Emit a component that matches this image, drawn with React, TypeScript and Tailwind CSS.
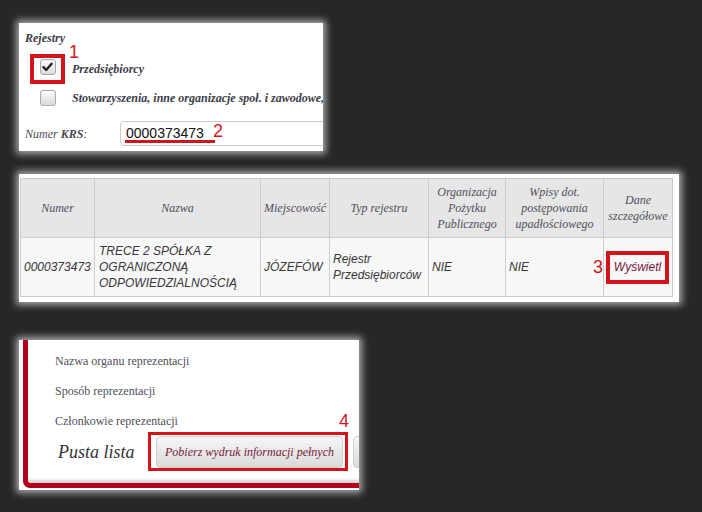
import React from 'react';

const serif = "font-['Liberation_Serif',serif]";
const sans = "font-['Liberation_Sans',Arial,sans-serif]";
const mark = `${sans} text-[18px] leading-none text-[#d0161b]`;
const glow = 'bg-white shadow-[0_0_7px_3px_rgba(255,255,255,0.6)] overflow-hidden';

function Checkbox({ checked }: { checked?: boolean }) {
  return (
    <div className="w-[16px] h-[16px] shrink-0 rounded-[3px] border border-[#a8a8a8] bg-gradient-to-b from-[#fbfbfb] to-[#dcdcdc] flex items-center justify-center">
      {checked && (
        <svg width="11" height="10" viewBox="0 0 11 10">
          <path d="M1.5 5.2 L4.2 8 L9.6 1.8" fill="none" stroke="#222" strokeWidth="2.4" strokeLinecap="round" strokeLinejoin="round" />
        </svg>
      )}
    </div>
  );
}

const headers = [
  { w: 'w-[74px]', label: 'Numer' },
  { w: 'w-[166px]', label: 'Nazwa' },
  { w: 'w-[69px]', label: 'Miejscowość' },
  { w: 'w-[99px]', label: 'Typ rejestru' },
  { w: 'w-[77px]', label: 'Organizacja Pożytku Publicznego' },
  { w: 'w-[98px]', label: 'Wpisy dot. postępowania upadłościowego' },
  { w: 'w-[69px]', label: 'Dane szczegółowe' },
];

export default function App() {
  return (
    <div className="min-h-[512px] w-full bg-[#272727] pl-[19px] pt-[23px] flex flex-col items-start">
      {/* Rejestry / KRS */}
      <div className={`relative w-[304px] h-[128px] ${glow} ${serif}`}>
        <div className="pl-[6px] pt-[8px] text-[12px] leading-[15px] font-bold italic text-[#3d3d48]">Rejestry</div>

        <div className="mt-[8px] ml-[11px] flex items-center h-[30px]">
          <div className="relative shrink-0 w-[35px] h-[30px] border-4 border-[#d0161b] flex justify-center items-start pt-[1px]">
            <Checkbox checked />
            <span className={`absolute left-[35px] top-[-15px] ${mark}`}>1</span>
          </div>
          <span className="ml-[7px] text-[12px] font-bold italic text-[#3d3d48]">Przedsiębiorcy</span>
        </div>

        <div className="mt-[6px] ml-[21px] flex items-center h-[16px] whitespace-nowrap">
          <Checkbox />
          <span className="ml-[16px] text-[12px] font-bold italic text-[#3d3d48]">
            Stowarzyszenia, inne organizacje społ. i zawodowe,
          </span>
        </div>

        <div className="mt-[15px] pl-[6px] flex items-center h-[25px]">
          <div className="w-[95px] shrink-0 whitespace-nowrap text-[12px] italic text-[#4a4a55]">
            Numer <span className="font-bold">KRS</span>:
          </div>
          <div className="relative w-[260px] h-[25px] shrink-0 border border-[#ccc] rounded-l-[4px] flex items-center pl-[5px]">
            <span className={`${sans} text-[14px] text-[#111]`}>0000373473</span>
            <div className="absolute left-[4px] top-[18px] w-[90px] h-[3px] bg-[#d0161b]" />
            <span className={`absolute left-[92px] top-[0px] ${mark} text-[17px]`}>2</span>
          </div>
        </div>
      </div>

      {/* Results table */}
      <div className={`mt-[23px] w-[660px] h-[128px] pl-[1px] pt-[4px] ${glow}`}>
        <table className="table-fixed border-collapse w-[653px]">
          <thead>
            <tr className="h-[59px] bg-[#e6e6e6]">
              {headers.map((h) => (
                <th
                  key={h.label}
                  className={`${h.w} border border-[#cccccc] px-[3px] text-center align-middle text-[12px] leading-[16px] italic font-normal text-[#50505c] ${serif}`}
                >
                  {h.label}
                </th>
              ))}
            </tr>
          </thead>
          <tbody>
            <tr className={`h-[59px] bg-[#f7f7f7] text-[12px] leading-[16px] italic text-[#38363a] ${sans}`}>
              <td className="border border-[#cccccc] px-[3px]">0000373473</td>
              <td className="border border-[#cccccc] px-[4px]">TRECE 2 SPÓŁKA Z OGRANICZONĄ ODPOWIEDZIALNOŚCIĄ</td>
              <td className="border border-[#cccccc] px-[3px]">JÓZEFÓW</td>
              <td className="border border-[#cccccc] px-[3px]">Rejestr Przedsiębiorców</td>
              <td className="border border-[#cccccc] px-[3px]">NIE</td>
              <td className="border border-[#cccccc] px-[3px]">NIE</td>
              <td className="border border-[#cccccc] px-[1px]">
                <div className="relative ml-[1px] w-[63px] h-[33px] border-4 border-[#d0161b] flex items-center justify-center text-[#7a1838]">
                  Wyświetl
                  <span className={`absolute left-[-17px] top-[3px] ${mark} not-italic`}>3</span>
                </div>
              </td>
            </tr>
          </tbody>
        </table>
      </div>

      {/* Reprezentacja */}
      <div className={`mt-[38px] w-[340px] h-[150px] pl-[4px] pb-[2px] flex ${glow}`}>
        <div className={`w-[420px] shrink-0 h-full border-l-[5px] border-b-[5px] border-[#b3001b] rounded-bl-[7px] shadow-[inset_0_-4px_3px_-1px_#d6d6d6] pl-[27px] pt-[6px] ${serif}`}>
          {['Nazwa organu reprezentacji', 'Sposób reprezentacji', 'Członkowie reprezentacji'].map((t) => (
            <div key={t} className="h-[30px] flex items-center text-[12px] text-[#4f4f5a]">
              {t}
            </div>
          ))}
          <div className="h-[32px] flex items-center">
            <div className="w-[101px] shrink-0 whitespace-nowrap pl-[3px] text-[18px] italic text-[#333]">Pusta lista</div>
            <div className="relative shrink-0 w-[187px] h-[32px] rounded-[4px] border border-[#cfcfcf] bg-gradient-to-b from-[#f6f6f6] to-[#dadada] flex items-center justify-center whitespace-nowrap text-[12px] italic text-[#7a1838]">
              Pobierz wydruk informacji pełnych
              <div className="absolute left-[-9px] right-[-6px] top-[-5px] bottom-[-4px] border-[3px] border-[#d0161b]" />
              <span className={`absolute left-[182px] top-[-25px] ${mark} text-[16px] not-italic`}>4</span>
            </div>
            <div className="ml-[10px] shrink-0 w-[120px] h-[32px] rounded-[4px] border border-[#cfcfcf] bg-gradient-to-b from-[#f6f6f6] to-[#dadada]" />
          </div>
        </div>
      </div>
    </div>
  );
}
